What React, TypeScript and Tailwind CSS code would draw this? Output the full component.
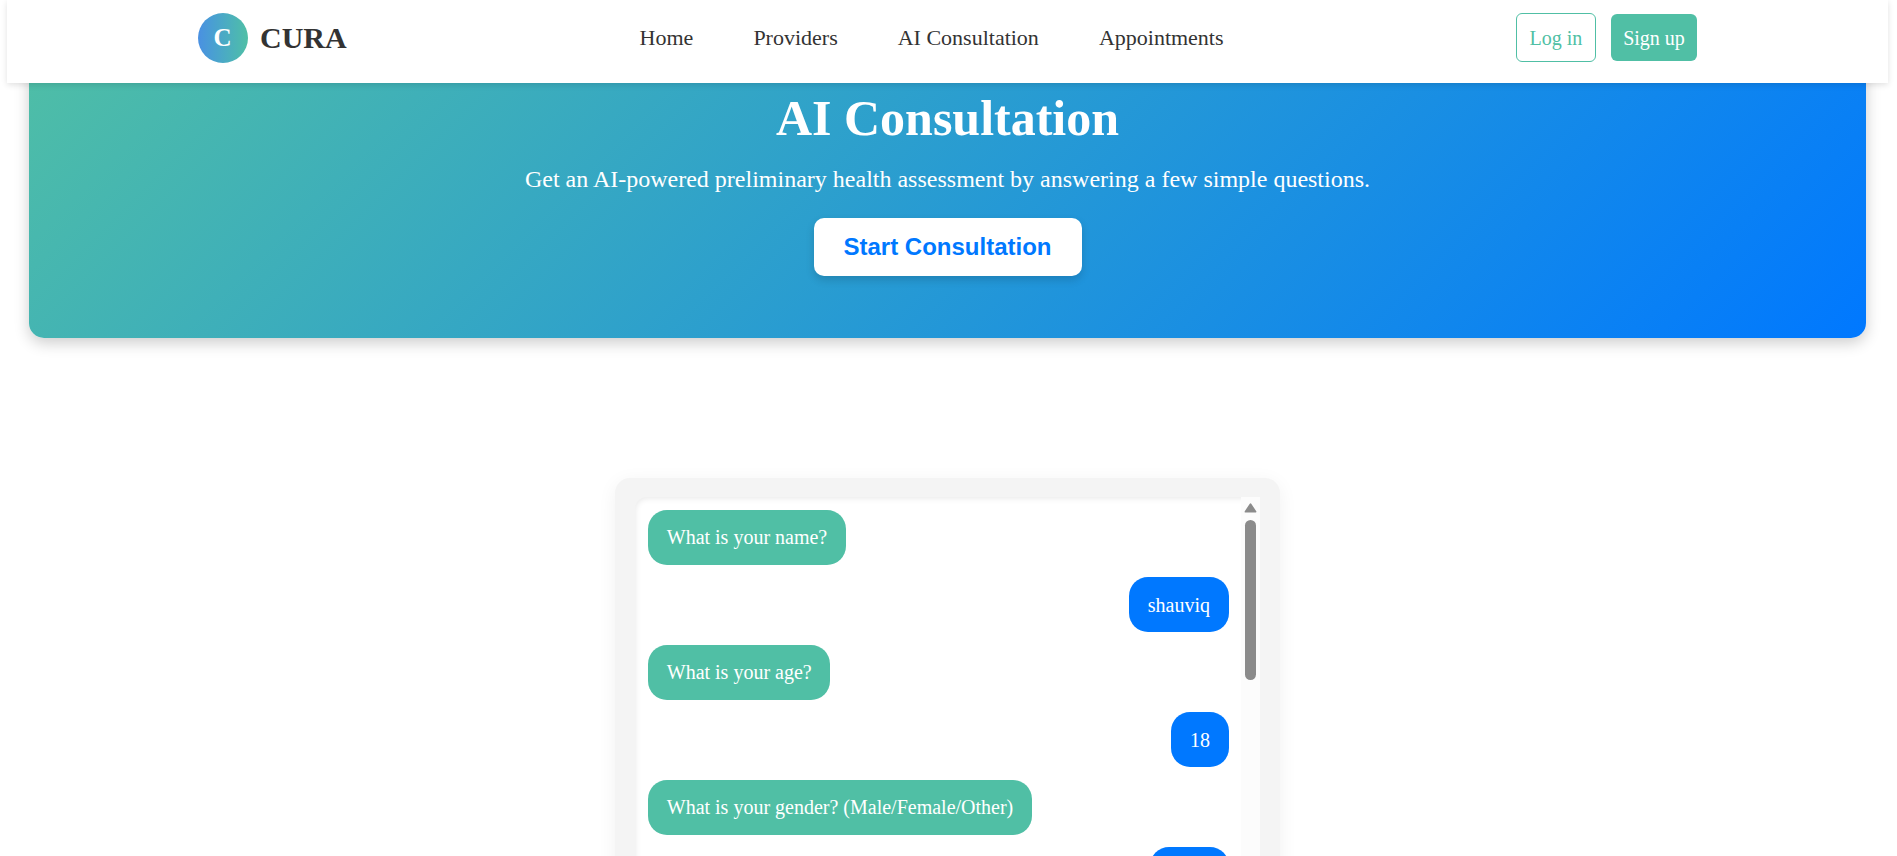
const links = ["Home", "Providers", "AI Consultation", "Appointments"];

const messages: { from: "bot" | "user"; text: string }[] = [
  { from: "bot", text: "What is your name?" },
  { from: "user", text: "shauviq" },
  { from: "bot", text: "What is your age?" },
  { from: "user", text: "18" },
  { from: "bot", text: "What is your gender? (Male/Female/Other)" },
];

function Header() {
  return (
    <header className="relative z-10 ml-[7px] h-[83px] w-[1881px] shrink-0 bg-white shadow-[0_2px_6px_rgba(0,0,0,0.12)]">
      <div className="mx-auto flex h-[76px] w-[1500px] items-center justify-between">
        <div className="flex items-center gap-[12.5px]">
          <div className="flex size-[50px] items-center justify-center rounded-full bg-linear-to-r from-[#4a90e2] to-[#50bfa5] text-[25px] font-bold text-white">
            C
          </div>
          <span className="pb-[2px] text-[30px] font-bold text-[#333]">CURA</span>
        </div>
        <nav className="flex gap-[60px] pb-[2px] text-[22px] text-[#333]">
          {links.map((l) => (
            <a key={l}>{l}</a>
          ))}
        </nav>
        <div className="flex items-center gap-[15px] pb-[2px] text-[20px]">
          <button className="h-[49px] w-[80px] rounded-[6px] border border-[#50bfa5] pt-[2px] pr-[1px] text-[#50bfa5]">
            Log in
          </button>
          <button className="h-[47px] w-[86px] rounded-[6px] bg-[#50bfa5] pt-[2px] pr-[1px] text-white">Sign up</button>
        </div>
      </div>
    </header>
  );
}

function Hero() {
  return (
    <section className="-mt-[54px] ml-[29px] flex h-[309px] w-[1837px] shrink-0 flex-col items-center rounded-[15px] bg-[linear-gradient(135deg,#50bfa5,#0078ff)] pt-[60px] text-white shadow-[0_5px_15px_rgba(0,0,0,0.2)]">
      <h1 className="text-[50px] leading-[58px] font-bold">AI Consultation</h1>
      <p className="mt-[19px] text-[24px] leading-[27px]">
        Get an AI-powered preliminary health assessment by answering a few simple questions.
      </p>
      <button className="mt-[25px] h-[58px] rounded-[10px] bg-white px-[30px] font-['Liberation_Sans',Arial,sans-serif] text-[24px] font-bold text-[#0078ff] shadow-[0_4px_8px_rgba(0,0,0,0.15)]">
        Start Consultation
      </button>
    </section>
  );
}

function Chat() {
  return (
    <section className="mt-[140px] ml-[615px] w-[665px] shrink-0 rounded-[15px] bg-[#f4f4f4] px-[20px] py-[19px] shadow-[0_4px_19px_rgba(0,0,0,0.06)]">
      <div className="flex h-[500px] w-[625px] overflow-hidden rounded-l-[12px] bg-white shadow-[inset_0_1px_6px_rgba(0,0,0,0.1)]">
        <div className="flex flex-1 flex-col gap-[12.5px] pt-[12.5px] pr-[12px] pl-[13px]">
          {messages.map((m) => (
            <div
              key={m.text}
              className={
                m.from === "bot"
                  ? "h-[55px] shrink-0 self-start rounded-[19px] bg-[#50bfa5] px-[18.75px] text-[20px] leading-[55px] text-white"
                  : "h-[55px] shrink-0 self-end rounded-[19px] bg-[#0078ff] px-[19px] text-[20px] leading-[57px] text-white"
              }
            >
              {m.text}
            </div>
          ))}
          <div className="h-[55px] w-[79px] shrink-0 self-end rounded-[19px] bg-[#0078ff]" />
        </div>
        <div className="flex w-[19px] flex-col items-center bg-[#fcfcfc] pt-[6px]">
          <svg className="h-[10px] w-[13px]" viewBox="0 0 13 10">
            <path d="M6.5 1.3 11.5 8.7H1.5Z" fill="#8b8b8b" stroke="#8b8b8b" strokeWidth="1.8" strokeLinejoin="round" />
          </svg>
          <div className="mt-[7px] h-[160px] w-[11px] rounded-full bg-[#8b8b8b]" />
        </div>
      </div>
    </section>
  );
}

export default function App() {
  return (
    <div className="flex h-[856px] w-[1897px] flex-col overflow-hidden bg-white font-['Liberation_Serif','Times_New_Roman',serif]">
      <Header />
      <Hero />
      <Chat />
    </div>
  );
}
